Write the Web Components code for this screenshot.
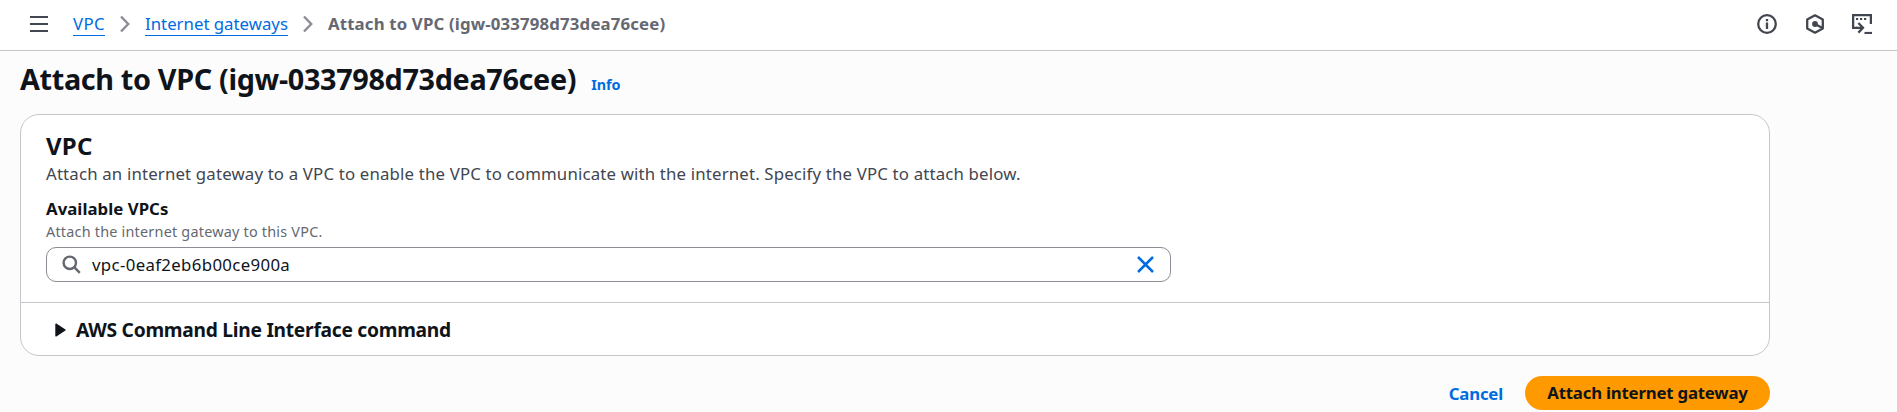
<!DOCTYPE html>
<html lang="en">
<head>
<meta charset="utf-8">
<title>Attach to VPC</title>
<style>
html, body { margin: 0; height: 100%; background: #fcfcfd; overflow: hidden; }
body { font: 16.8px/25px "Noto Sans", "Open Sans", sans-serif; color: #0f141a; }
</style>
</head>
<body>
<attach-page></attach-page>
<script>
const define = (name, html) => customElements.define(name, class extends HTMLElement {
  constructor() {
    super();
    this.attachShadow({ mode: 'open' }).innerHTML = html;
  }
});

const icons = {
  menu: [18, 18, '<path d="M0 2h18M0 9h18M0 16h18" stroke="#424650" stroke-width="2.2"/>'],
  chevron: [10, 18, '<path d="M1 1.5L8.2 9L1 16.5" stroke="#8c8c94" stroke-width="2.4"/>'],
  info: [20, 20, '<circle cx="10" cy="10" r="8.8" stroke="#424650" stroke-width="2.3"/><path d="M10 8.6V15M10 5v2.2" stroke="#424650" stroke-width="2.3"/>'],
  hex: [20, 20, '<path d="M10 1.3L17.8 5.4V14.6L10 18.7L2.2 14.6V5.4Z" stroke="#424650" stroke-width="2.3" stroke-linejoin="round"/><circle cx="10" cy="10" r="2.9" fill="#424650"/><path d="M10 10l7.5 4" stroke="#424650" stroke-width="2.3"/>'],
  shell: [20, 20, '<path d="M5 13.8H1.1V1.1H18.9V10" stroke="#424650" stroke-width="2.3"/><path d="M4 5h2.2M8 5h2.2M12 5h2.2" stroke="#424650" stroke-width="2.2"/><path d="M4 13.8h6.5M6.4 9l4.6 4.8l-4.6 4.8" stroke="#424650" stroke-width="2.3"/><path d="M12.5 19h7.5" stroke="#424650" stroke-width="2.2"/>'],
  search: [19, 19, '<circle cx="7.8" cy="7.8" r="6.2" stroke="#656871" stroke-width="2.4"/><path d="M12.2 12.2L17.8 17.8" stroke="#656871" stroke-width="2.4"/>'],
  close: [17, 17, '<path d="M1 1L16 16M16 1L1 16" stroke="#006ce0" stroke-width="2.5"/>'],
  caret: [11, 14, '<path d="M1 1.2L10 7L1 12.8Z" fill="#0f141a" stroke="#0f141a" stroke-width="1.4" stroke-linejoin="round"/>']
};
customElements.define('ui-icon', class extends HTMLElement {
  connectedCallback() {
    if (this.shadowRoot) return;
    const [w, h, body] = icons[this.getAttribute('name')];
    this.attachShadow({ mode: 'open' }).innerHTML =
      `<style>:host{display:block;flex:none;width:${w}px;height:${h}px}svg{display:block}</style>
       <svg width="${w}" height="${h}" viewBox="0 0 ${w} ${h}" fill="none">${body}</svg>`;
  }
});

define('crumb-link', `<style>
:host { display: block; }
a { display: block; color: #006ce0; line-height: 22px; height: 22px; border-bottom: 1px solid #006ce0; cursor: pointer; white-space: nowrap; }
</style><a><slot></slot></a>`);

define('top-bar', `<style>
:host { display: flex; box-sizing: border-box; height: 51px; padding: 0 25px 2px 30px; align-items: center; background: #fff; border-bottom: 1px solid #c6c6cd; }
nav { display: flex; align-items: center; margin-left: 25px; }
.sep { margin: 0 15px; }
.one { letter-spacing: .4px; }
.two { letter-spacing: 0; }
.here { color: #656871; font-weight: 700; letter-spacing: .16px; white-space: nowrap; line-height: 24px; }
.tools { display: flex; gap: 27.5px; margin-left: auto; }
</style>
<ui-icon name="menu"></ui-icon>
<nav>
<crumb-link class="one">VPC</crumb-link><ui-icon class="sep" name="chevron"></ui-icon>
<crumb-link class="two">Internet gateways</crumb-link><ui-icon class="sep" name="chevron"></ui-icon>
<span class="here"><slot></slot></span>
</nav>
<div class="tools"><ui-icon name="info"></ui-icon><ui-icon name="hex"></ui-icon><ui-icon name="shell"></ui-icon></div>`);

define('page-title', `<style>
:host { display: flex; align-items: baseline; gap: 15px; height: 36px; white-space: nowrap; }
h1 { margin: 0; font-size: 28.8px; line-height: 36px; font-weight: 700; letter-spacing: -.34px; }
a { font-size: 14.4px; line-height: 20px; font-weight: 700; color: #006ce0; letter-spacing: -.1px; }
</style><h1><slot></slot></h1><a>Info</a>`);

define('search-field', `<style>
:host { display: flex; box-sizing: border-box; width: 1125px; height: 35px; align-items: center; padding: 0 16px 0 15px; border: 1px solid #8c8c94; border-radius: 10px; background: #fff; }
span { flex: 1; margin-left: 11px; letter-spacing: .35px; }
</style><ui-icon name="search"></ui-icon><span><slot></slot></span><ui-icon name="close"></ui-icon>`);

define('panel-card', `<style>
:host { display: block; box-sizing: border-box; height: 242px; border: 1px solid #c6c6cd; border-radius: 19px; background: #fff; }
.body { box-sizing: border-box; height: 187px; padding: 17px 25px 20px; }
.foot { border-top: 1px solid #c6c6cd; height: 52px; }
</style><div class="body"><slot></slot></div><div class="foot"><slot name="footer"></slot></div>`);

define('vpc-form', `<style>
:host { display: block; }
h2 { margin: 0 0 1px; font-size: 24px; line-height: 28px; font-weight: 700; letter-spacing: .2px; }
p { margin: 0 0 10px; color: #424650; letter-spacing: .17px; }
label { display: block; font-weight: 700; letter-spacing: .04px; }
small { display: block; font-size: 14.4px; line-height: 20px; margin: 1px 0 5px; color: #656871; letter-spacing: .22px; }
</style>
<h2>VPC</h2>
<p>Attach an internet gateway to a VPC to enable the VPC to communicate with the internet. Specify the VPC to attach below.</p>
<label>Available VPCs</label>
<small>Attach the internet gateway to this VPC.</small>
<search-field>vpc-0eaf2eb6b00ce900a</search-field>`);

define('expand-row', `<style>
:host { display: flex; height: 52px; align-items: center; gap: 10px; padding-left: 34px; font-size: 19.2px; font-weight: 700; letter-spacing: -.26px; }
ui-icon { margin-top: 1px; }
</style><ui-icon name="caret"></ui-icon><span><slot></slot></span>`);

define('action-bar', `<style>
:host { display: flex; justify-content: flex-end; align-items: center; gap: 22px; height: 34px; font-weight: 700; }
.link { color: #006ce0; letter-spacing: -.2px; }
.primary { box-sizing: border-box; width: 245px; height: 34px; border-radius: 17px; background: #ff9900; text-align: center; line-height: 33px; letter-spacing: -.2px; }
</style><span class="link">Cancel</span><span class="primary">Attach internet gateway</span>`);

define('attach-page', `<style>
:host { display: block; }
main { padding: 10px 0 0 20px; width: 1750px; }
panel-card { margin: 17px 0 20px; }
</style>
<top-bar>Attach to VPC (igw-033798d73dea76cee)</top-bar>
<main>
<page-title>Attach to VPC (igw-033798d73dea76cee)</page-title>
<panel-card><vpc-form></vpc-form><expand-row slot="footer">AWS Command Line Interface command</expand-row></panel-card>
<action-bar></action-bar>
</main>`);
</script>
</body>
</html>
